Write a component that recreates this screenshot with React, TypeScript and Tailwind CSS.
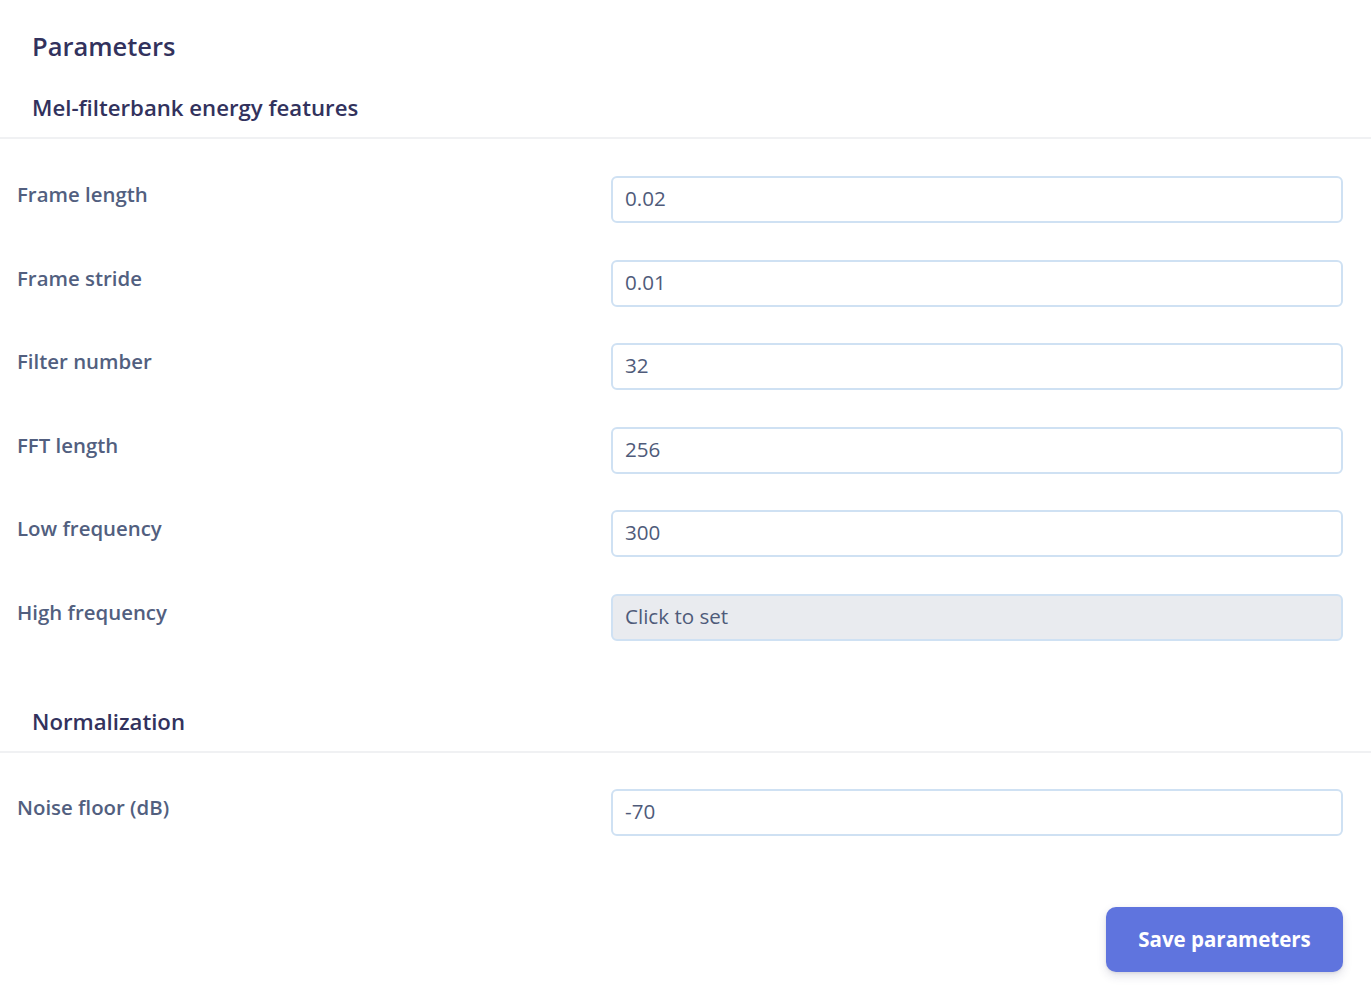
import React, { useState } from 'react'

interface Field {
  label: string
  value: string
  disabled?: boolean
}

const melFields: Field[] = [
  { label: 'Frame length', value: '0.02' },
  { label: 'Frame stride', value: '0.01' },
  { label: 'Filter number', value: '32' },
  { label: 'FFT length', value: '256' },
  { label: 'Low frequency', value: '300' },
  { label: 'High frequency', value: 'Click to set', disabled: true },
]

const FieldRow: React.FC<{ field: Field }> = ({ field }) => {
  const [value, setValue] = useState(field.value)
  return (
    <div className="grid grid-cols-[594px_1fr] items-start">
      <label className="pt-[4px] text-[20.4px] leading-[28px] font-semibold text-[#525f7f]">
        {field.label}
      </label>
      <input
        type="text"
        value={value}
        readOnly={field.disabled}
        onChange={(e) => setValue(e.target.value)}
        className={`h-[47px] w-full rounded-[6px] border-2 border-[#cfe1f3] px-[12px] pb-[3px] text-[20.6px] text-[#4f5b7a] focus:outline-none ${
          field.disabled ? 'bg-[#e9ebef]' : 'bg-white'
        }`}
      />
    </div>
  )
}

export default function App() {
  return (
    <div className="min-h-screen bg-white font-['Open_Sans',sans-serif]">
      {/* Title */}
      <h1 className="px-8 pt-[28px] text-[25.5px] leading-[36px] font-semibold text-[#32325d]">
        Parameters
      </h1>

      {/* Mel-filterbank section */}
      <div className="mt-[29px] border-b-2 border-[#f0f1f3] px-8 pb-[14px]">
        <h2 className="text-[22.2px] leading-[30px] font-semibold text-[#32325d]">
          Mel-filterbank energy features
        </h2>
      </div>

      <div className="flex flex-col gap-[36.5px] pl-[17px] pr-[28px] pt-[37px]">
        {melFields.map((f) => (
          <FieldRow key={f.label} field={f} />
        ))}
      </div>

      {/* Normalization section */}
      <div className="mt-[66px] border-b-2 border-[#f0f1f3] px-8 pb-[14px]">
        <h2 className="text-[22.2px] leading-[30px] font-semibold text-[#32325d]">
          Normalization
        </h2>
      </div>

      <div className="pl-[17px] pr-[28px] pt-[36px]">
        <FieldRow field={{ label: 'Noise floor (dB)', value: '-70' }} />
      </div>

      {/* Action */}
      <div className="flex justify-end pr-[28px] pt-[71px]">
        <button
          type="button"
          className="h-[65px] w-[237px] rounded-[10px] bg-[#5f74de] text-[20.5px] font-bold text-white shadow-[0_4px_10px_rgba(50,50,93,0.15),0_1px_3px_rgba(0,0,0,0.08)]"
        >
          Save parameters
        </button>
      </div>
    </div>
  )
}
